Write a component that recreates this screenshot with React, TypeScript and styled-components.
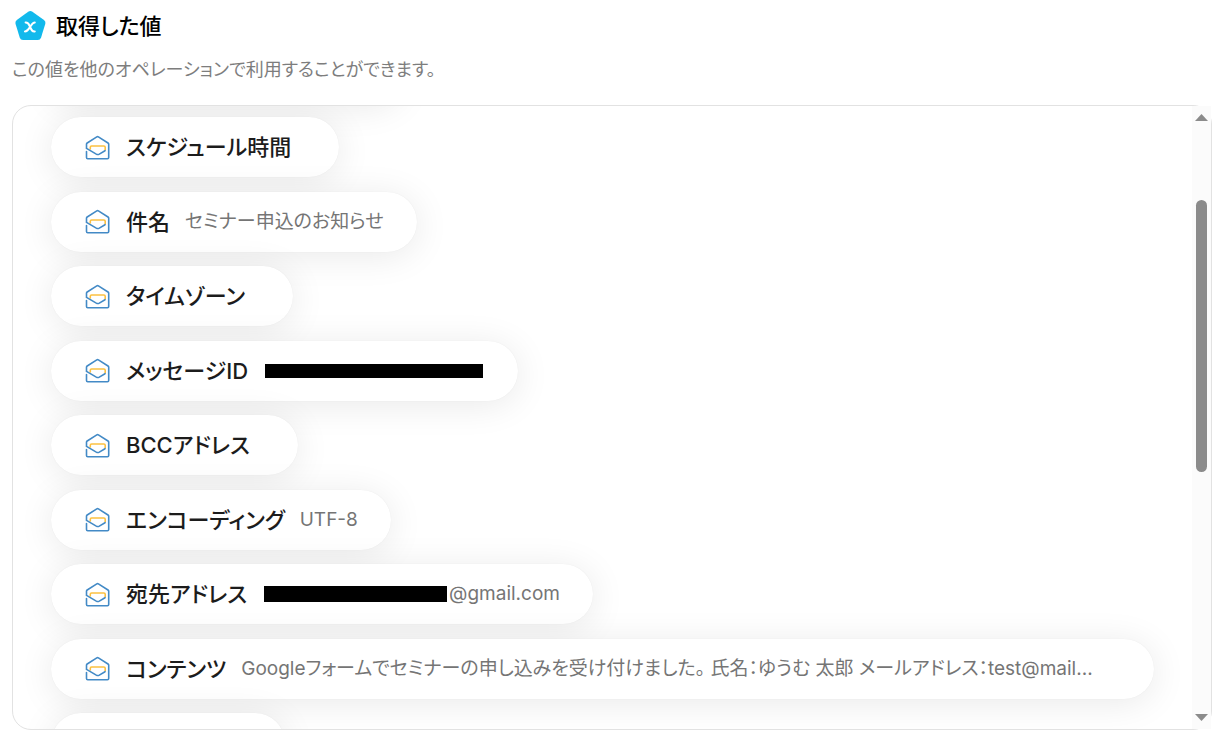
import React, { useLayoutEffect, useRef } from "react";
import styled, { createGlobalStyle } from "styled-components";

const GlobalStyle = createGlobalStyle`
  * { box-sizing: border-box; }
  body {
    margin: 0;
    background: #fff;
    font-family: Inter, "Noto Sans CJK JP", sans-serif;
    font-feature-settings: "palt";
  }
`;

const Page = styled.main`
  display: flex;
  flex-direction: column;
  height: 100vh;
  min-height: 320px;
  padding: 8px 9px 8px 12px;
`;

const Header = styled.header`
  display: flex;
  align-items: center;
  gap: 10px;
  height: 36px;
  padding-left: 2px;
`;

const Title = styled.h1`
  margin: 0;
  font-size: 22px;
  line-height: 32px;
  font-weight: 500;
  color: #000;
`;

const Lead = styled.p`
  margin: 12px 0 22px;
  font-size: 18px;
  line-height: 27px;
  color: #7d7d7d;
`;

const Panel = styled.section`
  display: flex;
  flex: 1;
  min-height: 0;
  border: 1px solid #e2e2e2;
  border-radius: 19px;
`;

const Viewport = styled.div`
  flex: 1;
  min-width: 0;
  overflow-y: auto;
  scrollbar-width: none;
  border-radius: 18px 0 0 18px;
`;

const List = styled.ul`
  display: flex;
  flex-direction: column;
  justify-content: space-between;
  align-items: flex-start;
  height: 730px;
  margin: 0;
  padding: 0 38px;
  list-style: none;
`;

const Pill = styled.li<{ $width?: string }>`
  display: flex;
  align-items: center;
  height: 60px;
  max-width: 100%;
  width: ${(p) => p.$width ?? "auto"};
  padding: 0 33px 0 34px;
  border-radius: 30px;
  background: #fff;
  box-shadow: 0 4px 36px rgba(0, 0, 0, 0.09), 0 0 1px rgba(0, 0, 0, 0.08);
`;

const Label = styled.span`
  margin: 0 15px 0 16px;
  font-size: 22px;
  line-height: 32px;
  font-weight: 500;
  white-space: nowrap;
  color: #1c1c1c;
`;

const Value = styled.span`
  display: flex;
  align-items: center;
  min-width: 0;
  font-size: 19px;
  line-height: 28px;
  color: #757575;
`;

const Ellipsis = styled.span`
  overflow: hidden;
  text-overflow: ellipsis;
  white-space: nowrap;
`;

const Redaction = styled.span<{ $width: number; $height: number }>`
  flex: none;
  width: ${(p) => p.$width}px;
  height: ${(p) => p.$height}px;
  margin: 0 2px;
  background: #000;
`;

const Scrollbar = styled.div`
  display: flex;
  flex-direction: column;
  align-items: center;
  justify-content: space-between;
  width: 19px;
  padding: 8px 0;
  background: #fbfbfb;
`;

const Track = styled.div`
  flex: 1;
  width: 11px;
  padding-top: 79px;
`;

const Thumb = styled.div`
  height: 53%;
  border-radius: 6px;
  background: #8b8b8b;
`;

const Logo = () => (
  <svg width="32" height="32" viewBox="0 0 32 32" aria-hidden="true">
    <path
      d="M14.2 1.8 Q16.3 0.4 18.4 1.8 L30 10 Q32 11.5 31.3 13.8 L27 27.7 Q26.2 30 23.8 30 H9 Q6.6 30 5.8 27.7 L1.5 13.8 Q0.8 11.5 2.8 10 Z"
      fill="#12b9ec"
    />
    <g fill="none" stroke="#fff" strokeWidth="2" strokeLinecap="round">
      <path d="M11.6 12.5 C14.4 12.2 14.8 14 16.1 17 S18 21.7 20.8 21.4" />
      <path d="M20.8 12.5 C18.5 12.5 17.3 15.2 16.1 17 S13.5 21.5 10.9 21.4" />
    </g>
  </svg>
);

const MailIcon = () => (
  <svg
    width="25"
    height="25"
    viewBox="0 0 25 25"
    fill="none"
    strokeWidth="1.6"
    strokeLinecap="round"
    strokeLinejoin="round"
    aria-hidden="true"
  >
    <path d="M5.3 14 V12.3 Q5.3 11 6.6 11 H18.9 Q20.2 11 20.2 12.3 V15" stroke="#fcc141" />
    <path
      d="M20 15.7 L14.3 19.1 Q12.8 19.9 11.3 19.1 L1.5 13.4 V9.3 Q1.500 8.5 2.2 8 L11.8 1.9 Q12.6 1.4 13.4 1.9 L23 8 Q23.7 8.5 23.7 9.3 V22.6 Q23.7 23.8 22.5 23.8 H2.7 Q1.5 23.8 1.5 22.6 V16.5"
      stroke="#438ac6"
    />
  </svg>
);

const Arrow = ({ down }: { down?: boolean }) => (
  <svg width="13" height="7" viewBox="0 0 13 7" aria-hidden="true">
    <path d={down ? "M0 0 H13 L6.5 7 Z" : "M0 7 H13 L6.5 0 Z"} fill="#8b8b8b" />
  </svg>
);

type Item = { label: string; text?: string; redacted?: [number, number]; wide?: boolean };

const items: Item[] = [
  { label: "スケジュール時間" },
  { label: "件名", text: "セミナー申込のお知らせ" },
  { label: "タイムゾーン" },
  { label: "メッセージID", redacted: [218, 14] },
  { label: "BCCアドレス" },
  { label: "エンコーディング", text: "UTF-8" },
  { label: "宛先アドレス", redacted: [183, 16], text: "@gmail.com" },
  {
    label: "コンテンツ",
    text: "Googleフォームでセミナーの申し込みを受け付けました。 氏名：ゆうむ 太郎 メールアドレス：test@mail...",
    wide: true,
  },
];

export default function App() {
  const viewport = useRef<HTMLDivElement>(null);

  useLayoutEffect(() => {
    if (viewport.current) viewport.current.scrollTop = 63;
  }, []);

  return (
    <>
      <GlobalStyle />
      <Page>
        <Header>
          <Logo />
          <Title>取得した値</Title>
        </Header>
        <Lead>この値を他のオペレーションで利用することができます。</Lead>
        <Panel>
          <Viewport ref={viewport}>
            <List>
              <Pill $width="352px" />
              {items.map((item) => (
                <Pill key={item.label} $width={item.wide ? "100%" : undefined}>
                  <MailIcon />
                  <Label>{item.label}</Label>
                  <Value>
                    {item.redacted && <Redaction $width={item.redacted[0]} $height={item.redacted[1]} />}
                    {item.text && <Ellipsis>{item.text}</Ellipsis>}
                  </Value>
                </Pill>
              ))}
              <Pill $width="234px" />
            </List>
          </Viewport>
          <Scrollbar aria-hidden="true">
            <Arrow />
            <Track>
              <Thumb />
            </Track>
            <Arrow down />
          </Scrollbar>
        </Panel>
      </Page>
    </>
  );
}
